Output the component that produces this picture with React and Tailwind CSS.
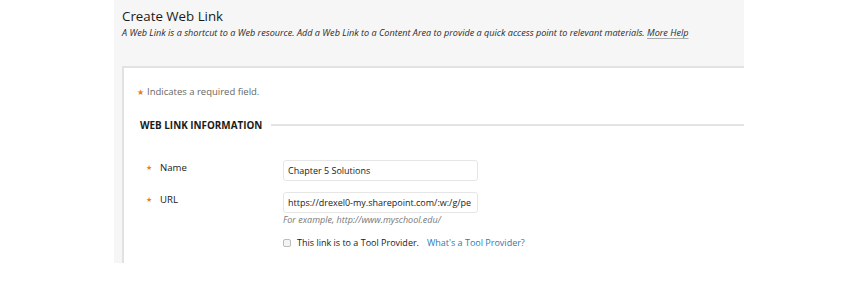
export default function App() {
  return (
    <div className="w-[864px] h-[289px] bg-white font-['Open_Sans',sans-serif] text-[#333]">
      <div className="ml-[114px] w-[630px] h-[263px] bg-[#f6f6f6] overflow-hidden flex flex-col pt-px">
        {/* Page header */}
        <div className="px-2 h-[65px]">
          <h1 className="text-[13.3px] leading-[18px] mt-[6px] text-[#1a1a1a]">Create Web Link</h1>
          <p className="text-[9.1px] italic leading-[12px] mt-[2px] text-[#2b2b2b] whitespace-nowrap">
            A Web Link is a shortcut to a Web resource. Add a Web Link to a Content Area to provide a quick access point to relevant materials.{' '}
            <a className="underline decoration-[#aaa] underline-offset-2">More Help</a>
          </p>
        </div>

        {/* Form box */}
        <div className="ml-2 flex-1 bg-white border-t-2 border-l-2 border-[#e2e2e2] pl-[13px]">
          <p className="mt-[17px] text-[9.5px] leading-[14px] text-[#666] flex items-center">
            <span className="text-[#e67e22] text-[8px] mr-[3px]">★</span>
            Indicates a required field.
          </p>

          <div className="mt-[19px] flex items-center">
            <h2 className="text-[9.9px] font-bold text-[#1a1a1a] leading-[14px] pl-[3px]">WEB LINK INFORMATION</h2>
            <div className="flex-1 h-[2px] bg-[#e4e4e4] ml-[9px]"></div>
          </div>

          {/* Name row */}
          <div className="mt-[28px] flex items-start">
            <div className="w-[146px] flex items-center pl-[9px] pt-px">
              <span className="text-[#e67e22] text-[7px] w-[14px]">★</span>
              <span className="text-[9.6px] leading-[14px] text-[#1a1a1a]">Name</span>
            </div>
            <div className="w-[195px] h-[21px] border border-[#e6e6e6] rounded-[3px] bg-white px-[4px] flex items-center text-[9px] text-[#1a1a1a]">
              Chapter 5 Solutions
            </div>
          </div>

          {/* URL row */}
          <div className="mt-[11px] flex items-start">
            <div className="w-[146px] flex items-center pl-[9px] pt-px">
              <span className="text-[#e67e22] text-[7px] w-[14px]">★</span>
              <span className="text-[9.6px] leading-[14px] text-[#1a1a1a]">URL</span>
            </div>
            <div>
              <div className="w-[195px] h-[21px] border border-[#e6e6e6] rounded-[3px] bg-white px-[4px] flex items-center text-[9px] text-[#1a1a1a] overflow-hidden whitespace-nowrap">
                https://drexel0-my.sharepoint.com/:w:/g/pe
              </div>
              <p className="text-[9px] italic text-[#777] leading-[12px] mt-[1px]">For example, http://www.myschool.edu/</p>
              <div className="mt-[11px] flex items-center">
                <span className="w-[8px] h-[8px] border border-[#bbb] rounded-[2px] bg-[#f4f4f4] mr-[6px]"></span>
                <span className="text-[9px] text-[#1a1a1a] leading-[12px]">This link is to a Tool Provider.</span>
                <a className="ml-[8px] text-[9px] leading-[12px] text-[#2a7bb5]">What's a Tool Provider?</a>
              </div>
            </div>
          </div>
        </div>
      </div>
    </div>
  );
}
